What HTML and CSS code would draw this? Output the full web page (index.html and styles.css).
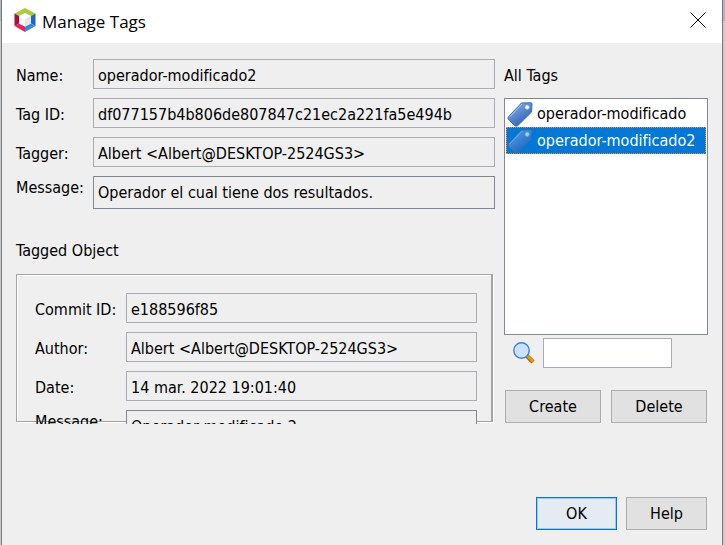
FILE: index.html
```html
<!DOCTYPE html>
<html lang="en">
<head>
<meta charset="utf-8">
<title>Manage Tags</title>
<link rel="stylesheet" href="styles.css">
</head>
<body>
<svg class="defs" aria-hidden="true">
  <defs>
    <linearGradient id="tag-fill" x1="0" y1="0" x2="0.7" y2="1">
      <stop offset="0" stop-color="#8fb8ea"/>
      <stop offset="0.5" stop-color="#5a8bd0"/>
      <stop offset="1" stop-color="#2a5aa8"/>
    </linearGradient>
    <symbol id="tag" viewBox="0 0 26 26">
      <path d="M14.500 1 24.500 .8Q25.500 1 25.500 2L25 10.500 10.500 24.800Q9 25.800 7.500 24.500L.8 18Q0 16.500 1 15.300Z" fill="url(#tag-fill)" stroke="#3a6cb8"/>
      <path d="M2 15.800 15 2.200" stroke="#a9c9f0" fill="none"/>
      <circle cx="20.500" cy="5.500" r="2" fill="#fff" stroke="#b8d0ef"/>
    </symbol>
  </defs>
</svg>
<main class="dialog">
  <header class="titlebar">
    <svg class="logo" viewBox="0 0 22 24" aria-hidden="true">
      <path d="M11 0 21.500 5.500 16.500 8.500 11 5.500 5.500 8.500 .5 5.500Z" fill="#a6cf38"/>
      <path d="M.5 5.500 5 8V15.500L.5 18Z" fill="#a50d45"/>
      <path d="M.5 18 5 15.500 11 18.500V24Z" fill="#e8225f"/>
      <path d="M21.500 5.500V18L17 15.500V8Z" fill="#1b66c2"/>
      <path d="M21.500 18 11 24V18.500L17 15.500Z" fill="#2f8de0"/>
      <path d="M11 5 17 8 11 11.500 5 8Z" fill="#fff"/>
      <path d="M5 8 11 11.500V18.500L5 15.500Z" fill="#f5f8f2"/>
      <path d="M17 8V15.500L11 18.500V11.500Z" fill="#dfe8df"/>
    </svg>
    <h1 class="title">Manage Tags</h1>
    <button class="close" type="button" aria-label="Close">
      <svg viewBox="0 0 16 16"><path d="M.5.5 15.500 15.500M15.500.5.5 15.500" stroke="#000" fill="none"/></svg>
    </button>
  </header>
  <form class="content">
    <section class="details">
      <div class="fields">
        <label for="name">Name:</label><input id="name" class="field" readonly value="operador-modificado2">
        <label for="tag-id">Tag ID:</label><input id="tag-id" class="field" readonly value="df077157b4b806de807847c21ec2a221fa5e494b">
        <label for="tagger">Tagger:</label><input id="tagger" class="field" readonly value="Albert &lt;Albert@DESKTOP-2524GS3&gt;">
        <label class="top" for="message">Message:</label><textarea id="message" class="field area" rows="1" readonly>Operador el cual tiene dos resultados.</textarea>
      </div>
      <h2 class="heading">Tagged Object</h2>
      <div class="viewport">
        <div class="group">
          <div class="fields inner">
            <label for="commit">Commit ID:</label><input id="commit" class="field" readonly value="e188596f85">
            <label for="author">Author:</label><input id="author" class="field" readonly value="Albert &lt;Albert@DESKTOP-2524GS3&gt;">
            <label for="date">Date:</label><input id="date" class="field" readonly value="14 mar. 2022 19:01:40">
            <label class="top" for="commit-message">Message:</label><textarea id="commit-message" class="field area" rows="1" readonly>Operador modificado 2</textarea>
          </div>
        </div>
      </div>
    </section>
    <section class="tags">
      <h2 class="list-title" id="all-tags">All Tags</h2>
      <ul class="list" role="listbox" aria-labelledby="all-tags">
        <li class="item" role="option" aria-selected="false"><svg class="tag"><use href="#tag"/></svg>operador-modificado</li>
        <li class="item selected" role="option" aria-selected="true"><svg class="tag"><use href="#tag"/></svg>operador-modificado2</li>
      </ul>
      <div class="search">
        <label for="filter" aria-label="Search">
          <svg class="lens" viewBox="0 0 22 22">
            <path d="M14 14 20 20" stroke="#a86c00" stroke-width="4.500"/>
            <path d="M14.500 14 20 19.500" stroke="#e59a00" stroke-width="2.500"/>
            <circle cx="8.500" cy="8.500" r="7.700" fill="#c9e2ff" stroke="#3d86cf" stroke-width="1.400"/>
          </svg>
        </label>
        <input id="filter" class="filter" type="text">
      </div>
      <div class="actions">
        <button class="button" type="button">Create</button>
        <button class="button" type="button">Delete</button>
      </div>
    </section>
  </form>
  <footer class="footer">
    <button class="button primary" type="button">OK</button>
    <button class="button" type="button">Help</button>
  </footer>
</main>
</body>
</html>
```
FILE: styles.css
```css
* {
  box-sizing: border-box;
}

body {
  margin: 0;
  padding: 0 2px 0 1px;
  background: linear-gradient(to bottom, #a9b7cc 21px, #cacaca 21px);
  color: #000;
  font: 16px/20px "DejaVu Sans Condensed", "Noto Sans", sans-serif;
  font-variant-ligatures: none;
}

h1,
h2,
ul {
  margin: 0;
  padding: 0;
  font: inherit;
}

input,
textarea,
button {
  margin: 0;
  color: inherit;
  font: inherit;
}

.defs {
  position: absolute;
  width: 0;
  height: 0;
}

.dialog {
  display: flex;
  flex-direction: column;
  min-height: 100vh;
  border: solid #777a7d;
  border-width: 0 1px;
  background: #efefef;
}

.titlebar {
  display: flex;
  align-items: center;
  height: 43px;
  padding: 0 16px 3px 12px;
  background: #fff;
}

.logo {
  width: 22px;
  height: 24px;
}

.title {
  flex: 1;
  margin-left: 6px;
  padding-top: 4px;
  font-family: "Open Sans", "Noto Sans", sans-serif;
  font-size: 17px;
}

.close {
  width: 16px;
  height: 16px;
  padding: 0;
  border: 0;
  background: none;
}

.close svg {
  display: block;
}

.content {
  display: grid;
  grid-template-columns: minmax(0, 1fr) 204px;
  column-gap: 9px;
  padding: 16px 14px 0;
}

.fields {
  display: grid;
  grid-template-columns: 77px minmax(0, 1fr);
  align-items: center;
  row-gap: 9px;
}

.fields label {
  padding-top: 4px;
}

.fields .top {
  align-self: start;
  padding-top: 2px;
}

.field {
  display: block;
  width: 100%;
  height: 30px;
  padding: 4px 4px 2px;
  border: 1px solid #abadb3;
  border-radius: 0;
  background: #efefef;
  outline: none;
}

.area {
  height: 33px;
  padding-top: 6px;
  border-color: #828790;
  overflow: hidden;
  resize: none;
}

.heading {
  margin: 32px 0 13px;
}

.viewport {
  height: 150px;
  overflow: hidden;
}

.group {
  height: 148px;
  margin-right: 2px;
  padding: 18px 14px 0 18px;
  border: 1px solid #a5a5a5;
  border-right-width: 2px;
  box-shadow: inset 1px 1px #fff, 1px 1px #fff;
}

.inner {
  grid-template-columns: 91px minmax(0, 1fr);
}

.list-title {
  padding: 7px 0 12px;
}

.list {
  height: 237px;
  padding: 1px;
  border: 1px solid #828790;
  background: #fff;
  list-style: none;
}

.item {
  display: flex;
  align-items: center;
  gap: 4px;
  height: 27px;
  padding-top: 1px;
  border: 1px solid transparent;
}

.selected {
  border: 1px dotted #ff8728;
  background: #0078d7;
  color: #fff;
}

.tag {
  width: 26px;
  height: 25px;
}

.selected .tag {
  opacity: 0.65;
}

.search {
  display: flex;
  align-items: center;
  gap: 8px;
  margin: 3px 36px 22px 9px;
}

.lens {
  display: block;
  width: 22px;
  height: 22px;
}

.filter {
  flex: 1;
  min-width: 0;
  height: 30px;
  border: 1px solid #abadb3;
  background: #fff;
}

.actions {
  display: grid;
  grid-template-columns: 1fr 1fr;
  gap: 10px;
  padding: 0 1px;
}

.button {
  height: 33px;
  padding: 0;
  border: 1px solid #adadad;
  background: #e1e1e1;
}

.footer {
  display: grid;
  grid-template-columns: 81px 81px;
  justify-content: end;
  gap: 9px;
  margin-top: auto;
  padding: 20px 15px 15px;
}

.primary {
  border-color: #0078d7;
  background: #e4ebf2;
  box-shadow: inset 0 0 0 1px #9bcaf0;
}
```
